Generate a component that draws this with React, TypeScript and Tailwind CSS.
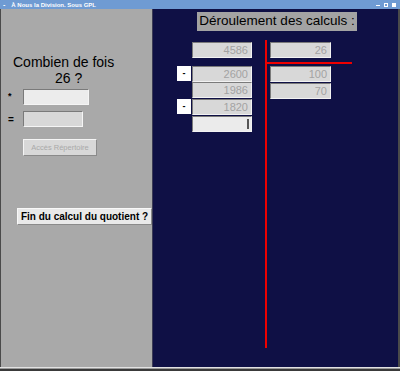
import React from 'react';

// Petit champ "désactivé" façon Swing
const Field: React.FC<{ value?: string; className?: string; light?: boolean; caret?: boolean }> = ({
  value,
  className = '',
  light,
  caret,
}) => (
  <div
    className={`relative flex h-[16px] items-center justify-end border border-t-[#7a7a7a] border-l-[#7a7a7a] border-r-[#f2f2f2] border-b-[#f2f2f2] pr-[3px] text-[11px] leading-none text-[#a3a3a3] ${
      light ? 'bg-[#ebebeb]' : 'bg-[#d8d8d8]'
    } ${className}`}
  >
    {value}
    {caret && <span className="absolute right-[2px] top-[2px] h-[10px] w-[2px] bg-[#555]" />}
  </div>
);

const Minus: React.FC<{ className?: string }> = ({ className = '' }) => (
  <div className={`flex h-[15px] w-[14px] items-center justify-center bg-white text-[9px] font-bold leading-none text-black ${className}`}>
    -
  </div>
);

export default function App() {
  return (
    <div className="flex h-[371px] w-[400px] flex-col bg-[#4a4a4a] font-['Liberation_Sans',Arial,sans-serif]">
      {/* barre de titre */}
      <div className="flex h-[9px] items-center bg-[#6f9bd3] px-[3px] text-white">
        <span className="text-[7px] font-bold leading-none">-</span>
        <span className="ml-[6px] text-[6px] font-bold leading-none">À Nous la Division. Sous GPL</span>
        <div className="ml-auto flex items-center gap-[4px] pr-[1px]">
          <span className="mt-[2px] h-[1px] w-[4px] bg-white" />
          <span className="h-[4px] w-[4px] border border-white" />
          <span className="h-[4px] w-[4px] bg-white" />
        </div>
      </div>

      <div className="flex flex-1 pl-[1px] pr-[2px]">
        {/* panneau gauche */}
        <div className="flex w-[151px] flex-col bg-[#a9a9a9] text-black">
          <div className="mt-[45px] whitespace-nowrap pl-[12px] text-[14px] leading-[16px]">Combien de fois</div>
          <div className="whitespace-nowrap pl-[54px] text-[14px] leading-[16px]">26 ?</div>
          <div className="mt-[3px] flex items-center">
            <span className="w-[22px] pl-[7px] text-[9px] font-bold">*</span>
            <div className="h-[16px] w-[66px] border border-t-[#7a7a7a] border-l-[#7a7a7a] border-r-[#f5f5f5] border-b-[#f5f5f5] bg-[#ececec]" />
          </div>
          <div className="mt-[6px] flex items-center">
            <span className="w-[22px] pl-[7px] text-[10px] font-bold">=</span>
            <div className="h-[16px] w-[60px] border border-t-[#7a7a7a] border-l-[#7a7a7a] border-r-[#f5f5f5] border-b-[#f5f5f5] bg-[#d8d8d8]" />
          </div>
          <div className="ml-[22px] mt-[12px] flex h-[17px] w-[74px] items-center justify-center whitespace-nowrap border border-t-[#f5f5f5] border-l-[#f5f5f5] border-r-[#8a8a8a] border-b-[#8a8a8a] bg-[#d8d8d8] text-[7.5px] text-[#a9a9a9]">
            Accès Répertoire
          </div>
          <div className="ml-[16px] mt-[52px] flex h-[17px] w-[135px] items-center justify-center whitespace-nowrap border border-t-[#f8f8f8] border-l-[#f8f8f8] border-r-[#8a8a8a] border-b-[#8a8a8a] bg-[#e9e9e9] text-[10px] font-bold">
            Fin du calcul du quotient ?
          </div>
        </div>

        <div className="w-[1px] bg-[#3c3c55]" />

        {/* panneau droit */}
        <div className="relative flex flex-1 flex-col bg-[#0f1045]">
          <div className="ml-[44px] mt-[3px] flex h-[19px] w-[160px] items-center justify-center whitespace-nowrap bg-[#a3a3a3] text-[13.5px] text-black">
            Déroulement des calculs :
          </div>

          <div className="mt-[11px] flex">
            <div className="ml-[24px] flex">
              <div className="flex w-[15px] flex-col">
                <Minus className="mt-[24px]" />
                <Minus className="mt-[18px]" />
              </div>
              <div className="flex w-[60px] flex-col">
                <Field value="4586" />
                <Field value="2600" className="mt-[8px]" />
                <Field value="1986" />
                <Field value="1820" className="mt-[1px]" />
                <Field light caret className="mt-[1px]" />
              </div>
            </div>
            <div className="ml-[18px] flex w-[61px] flex-col">
              <Field value="26" />
              <Field value="100" className="mt-[8px]" />
              <Field value="70" className="mt-[1px]" />
            </div>
          </div>

          {/* traits rouges de la potence */}
          <div className="absolute left-[112px] top-[31px] h-[308px] w-[2px] bg-[#ee0000]" />
          <div className="absolute left-[112px] top-[53px] h-[2px] w-[87px] bg-[#ee0000]" />
        </div>
      </div>

      {/* bord inférieur */}
      <div className="h-[1px] bg-[#e2e2e2]" />
      <div className="h-[1px] bg-[#9a9a9a]" />
      <div className="h-[2px] bg-[#3a3a3a]" />
    </div>
  );
}
